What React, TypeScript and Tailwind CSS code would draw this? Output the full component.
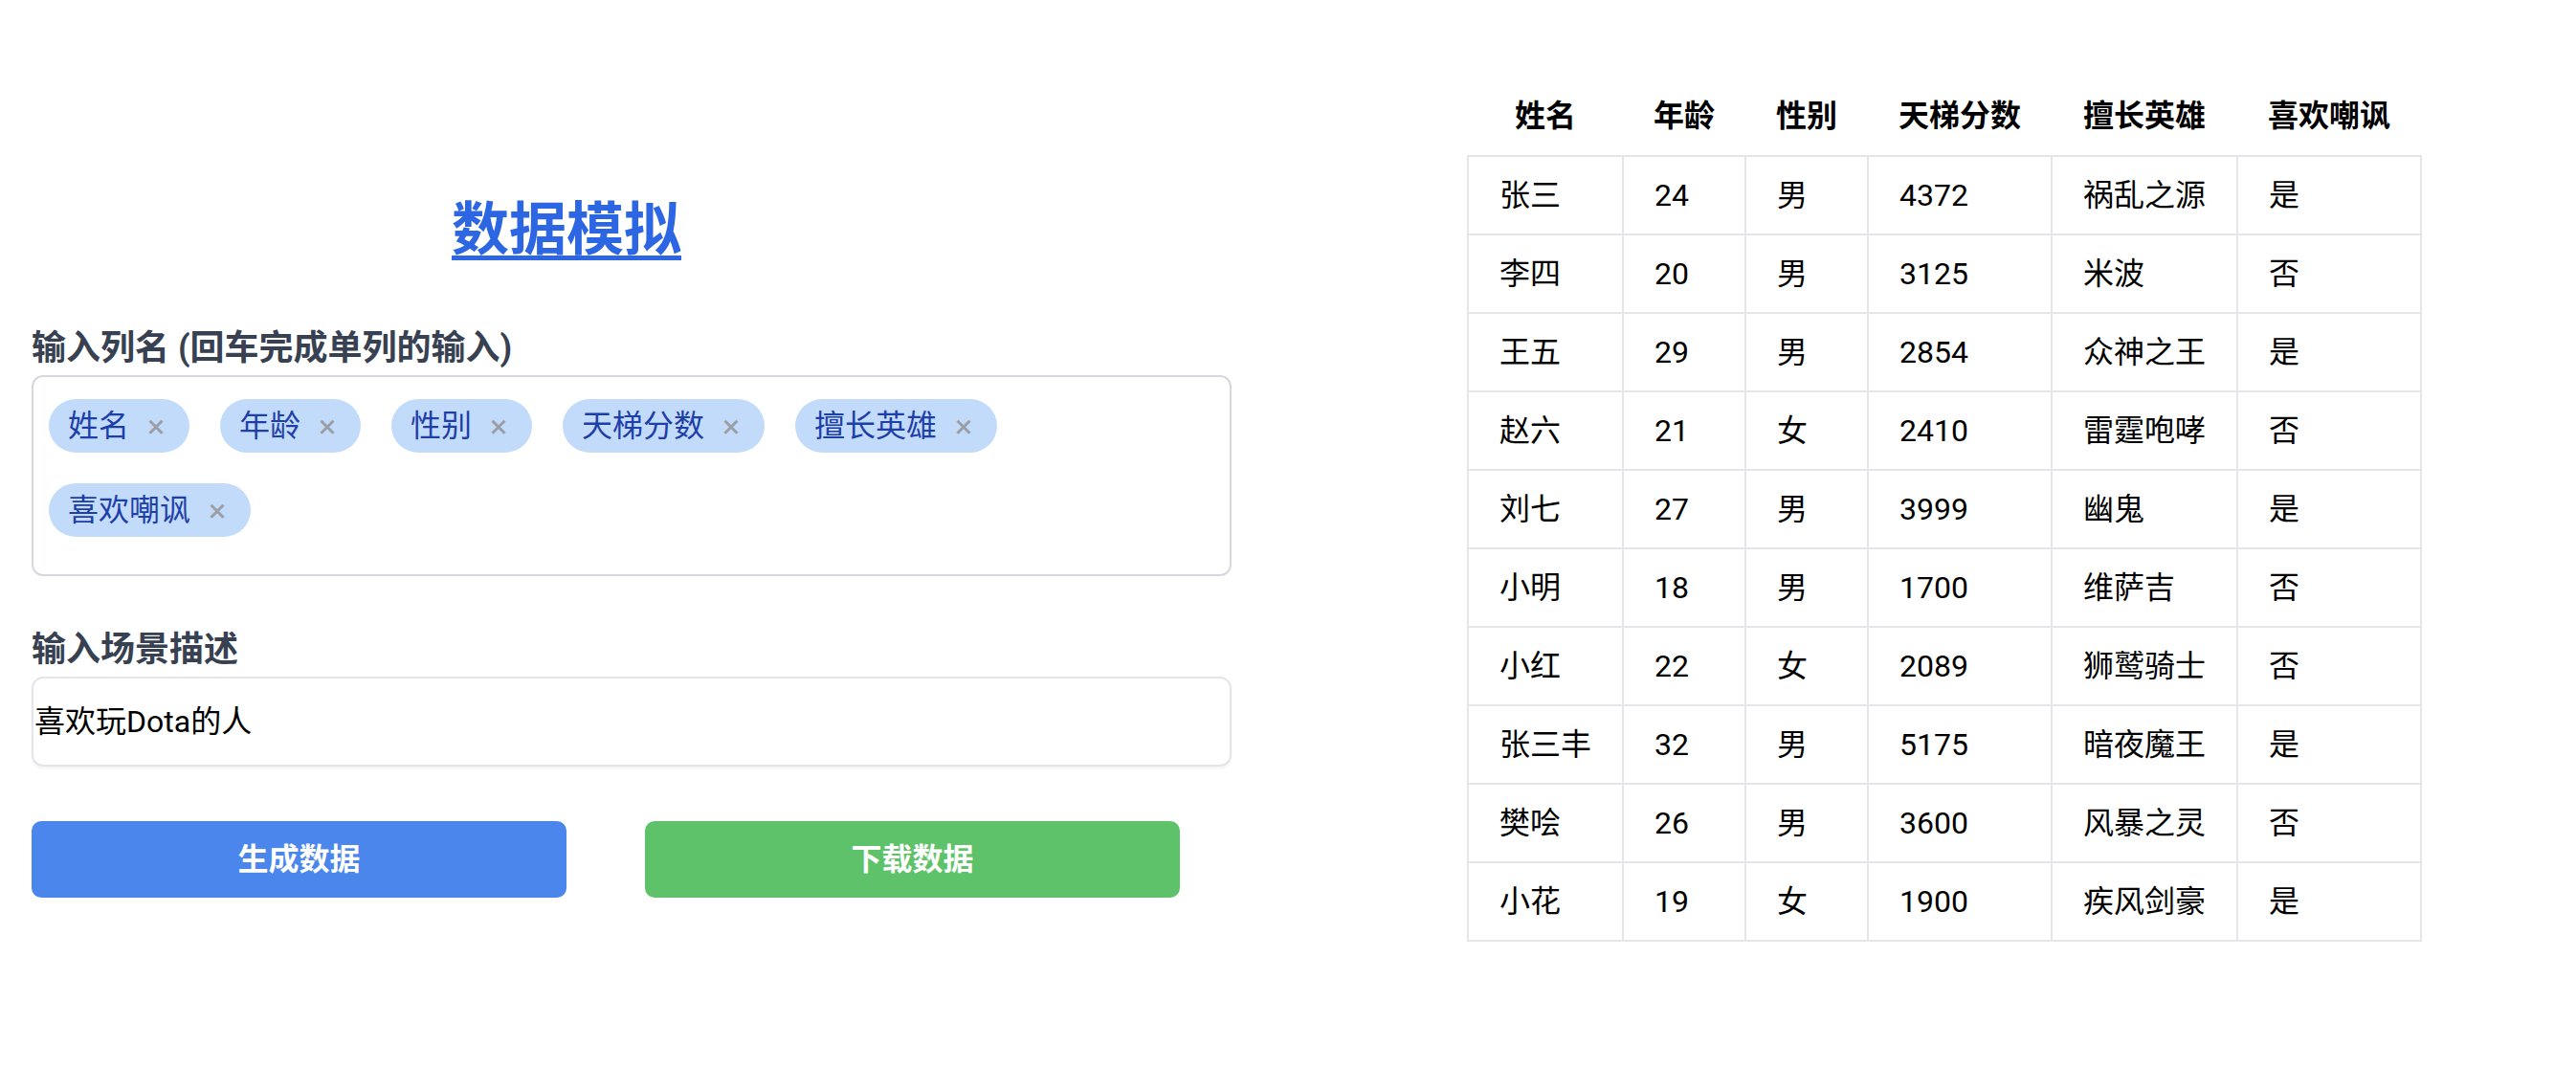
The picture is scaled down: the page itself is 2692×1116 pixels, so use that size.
import React from "react";

const columns = ["姓名", "年龄", "性别", "天梯分数", "擅长英雄", "喜欢嘲讽"];

const rows: string[][] = [
  ["张三", "24", "男", "4372", "祸乱之源", "是"],
  ["李四", "20", "男", "3125", "米波", "否"],
  ["王五", "29", "男", "2854", "众神之王", "是"],
  ["赵六", "21", "女", "2410", "雷霆咆哮", "否"],
  ["刘七", "27", "男", "3999", "幽鬼", "是"],
  ["小明", "18", "男", "1700", "维萨吉", "否"],
  ["小红", "22", "女", "2089", "狮鹫骑士", "否"],
  ["张三丰", "32", "男", "5175", "暗夜魔王", "是"],
  ["樊哙", "26", "男", "3600", "风暴之灵", "否"],
  ["小花", "19", "女", "1900", "疾风剑豪", "是"],
];

const font = "font-['Roboto','Noto_Sans_CJK_SC',sans-serif]";

function Tag({ label }: { label: string }) {
  return (
    <span className="flex items-center h-[56px] rounded-full bg-[#c3dbfa] pl-[20px] pr-[23px]">
      <span className="text-[32px] leading-[56px] text-[#1e3fa8]">{label}</span>
      <span className="ml-[16px] w-[24px] flex justify-center text-[34px] leading-[56px] text-[#9a9ea6]">
        ×
      </span>
    </span>
  );
}

export default function App() {
  return (
    <div className={`w-[2692px] h-[1116px] bg-white flex items-start ${font}`}>
      <div className="pl-[33px] pt-[205px] flex flex-col">
        <div className="w-[1118px] flex justify-center">
          <a className="text-[60px] leading-[72px] font-bold text-[#2d66e3] underline decoration-[5px] underline-offset-[6px]">
            数据模拟
          </a>
        </div>
        <div className="mt-[59px] text-[36px] leading-[56px] font-bold text-[#374151]">
          输入列名 (回车完成单列的输入)
        </div>
        <div className="w-[1254px] h-[210px] border-2 border-[#d5d8dd] rounded-[12px] pl-[16px] pr-[16px] pt-[23px] flex flex-wrap content-start gap-[32px]">
          {columns.map((c) => (
            <Tag key={c} label={c} />
          ))}
        </div>
        <div className="mt-[49px] text-[36px] leading-[56px] font-bold text-[#374151]">
          输入场景描述
        </div>
        <div className="w-[1254px] h-[94px] border-2 border-[#e4e5e9] rounded-[12px] shadow-[0_2px_3px_rgba(0,0,0,0.06)] flex items-center pl-[1px]">
          <span className="text-[32px] leading-[48px] text-black">喜欢玩Dota的人</span>
        </div>
        <div className="mt-[57px] flex gap-[82px]">
          <button className="w-[559px] h-[80px] rounded-[10px] bg-[#4a86ec] text-white text-[32px] font-bold">
            生成数据
          </button>
          <button className="w-[559px] h-[80px] rounded-[10px] bg-[#5ec26a] text-white text-[32px] font-bold">
            下载数据
          </button>
        </div>
      </div>
      <div className="ml-[246px] mt-[80px]">
        <table className="border-collapse">
          <thead>
            <tr>
              {columns.map((c) => (
                <th
                  key={c}
                  className="px-[32px] h-[83px] text-[32px] leading-[48px] font-bold text-black text-center"
                >
                  {c}
                </th>
              ))}
            </tr>
          </thead>
          <tbody>
            {rows.map((r, i) => (
              <tr key={i}>
                {r.map((v, j) => (
                  <td
                    key={j}
                    className="border-2 border-[#e5e6ea] px-[32px] py-[16px] text-[32px] leading-[48px] text-black text-left whitespace-nowrap"
                  >
                    {v}
                  </td>
                ))}
              </tr>
            ))}
          </tbody>
        </table>
      </div>
    </div>
  );
}
